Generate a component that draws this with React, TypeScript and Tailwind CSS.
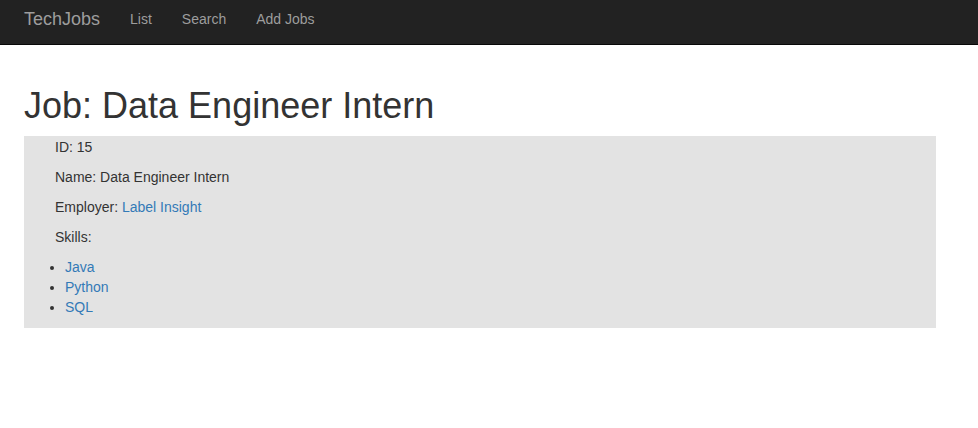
const skills = ["Java", "Python", "SQL"];

const App: React.FC = (): React.JSX.Element => {
  return (
    <div className="min-h-screen bg-white font-['Liberation_Sans',Arial,sans-serif] text-[14px] leading-[20px] text-[#333]">
      <nav className="h-[45px] bg-[#222] border-b border-[#080808] flex items-start pt-[9px] pl-[24px]">
        <a className="text-[18px] leading-[20px] text-[#9d9d9d]" href="#">
          TechJobs
        </a>
        <ul className="flex ml-[15px]">
          <li>
            <a className="block px-[15px] text-[#9d9d9d]" href="#">
              List
            </a>
          </li>
          <li>
            <a className="block px-[15px] text-[#9d9d9d]" href="#">
              Search
            </a>
          </li>
          <li>
            <a className="block px-[15px] text-[#9d9d9d]" href="#">
              Add Jobs
            </a>
          </li>
        </ul>
      </nav>

      <div className="pl-[24px] pr-[42px]">
        <h1 className="mt-[41px] mb-[10px] text-[36px] leading-[39.6px] font-normal text-[#333]">
          Job: Data Engineer Intern
        </h1>
        <div className="bg-[#e3e3e3] pt-[1px] pb-[11px]">
          <p className="ml-[31px] mb-[10px]">ID: 15</p>
          <p className="ml-[31px] mb-[10px]">Name: Data Engineer Intern</p>
          <p className="ml-[31px] mb-[10px]">
            Employer:{" "}
            <a className="text-[#337ab7]" href="#">
              Label Insight
            </a>
          </p>
          <p className="ml-[31px] mb-[10px]">Skills:</p>
          <ul className="list-disc pl-[41px]">
            {skills.map((s) => (
              <li key={s}>
                <a className="text-[#337ab7]" href="#">
                  {s}
                </a>
              </li>
            ))}
          </ul>
        </div>
      </div>
    </div>
  );
};

export default App;
